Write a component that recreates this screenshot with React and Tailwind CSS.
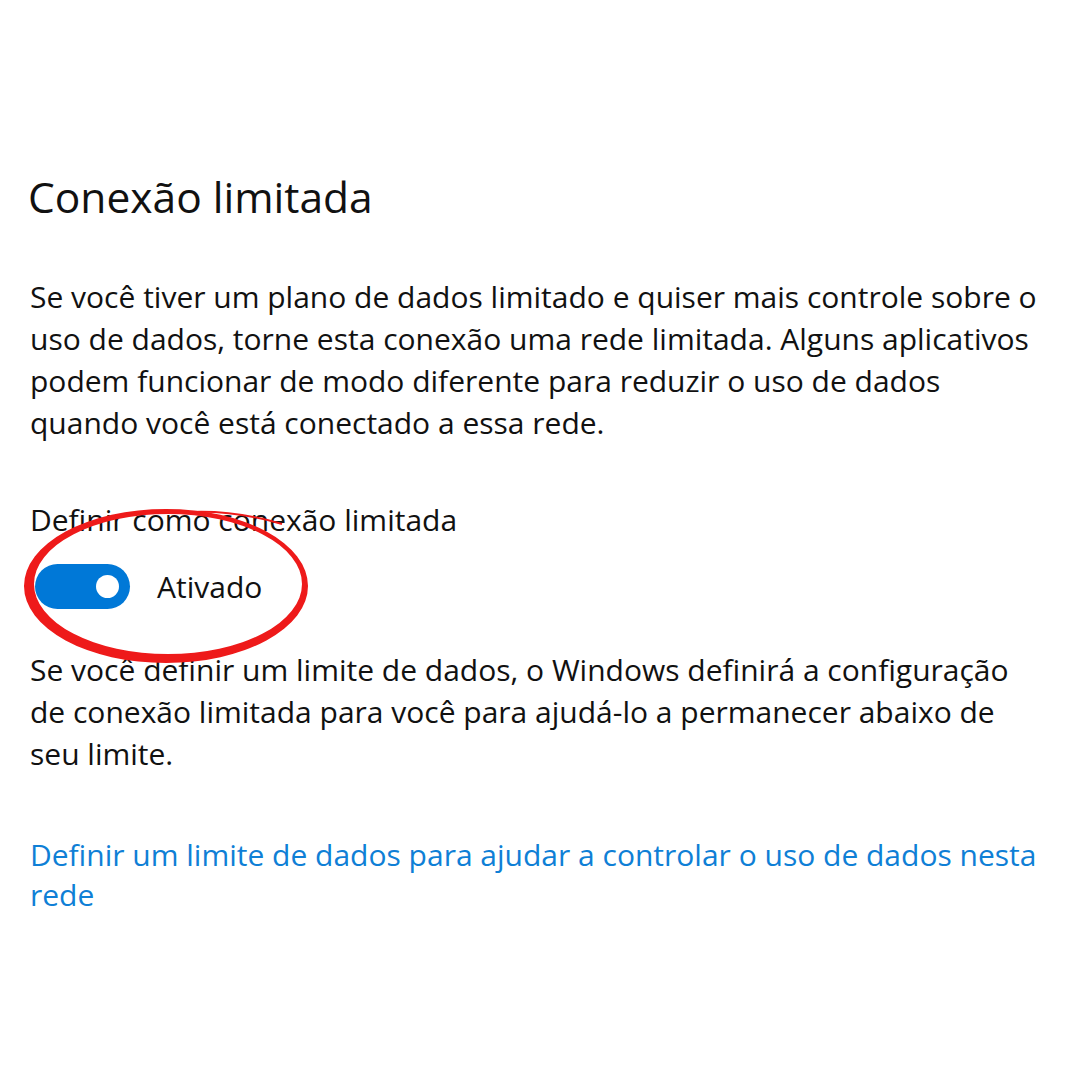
import React from 'react';

const Toggle = ({ on }) => (
    <div className={`flex h-[45px] w-[95px] items-center rounded-full px-[11px] ${on ? 'justify-end bg-[#0078d7]' : 'justify-start border-2 border-black bg-white'}`}>
        <div className={`h-[23px] w-[23px] rounded-full ${on ? 'bg-white' : 'bg-black'}`} />
    </div>
);

// hand-drawn style marker circle (thick bottom-left, thinner top-right)
const MarkerCircle = () => (
    <svg className="pointer-events-none absolute left-[20px] top-[500px]" width="300" height="175" viewBox="0 0 300 175">
        <path
            fillRule="evenodd"
            fill="#ee1a1a"
            d="M4 86 A142 77 0 1 0 288 86 A142 77 0 1 0 4 86 Z M14 84 A134 70 0 1 1 282 84 A134 70 0 1 1 14 84 Z"
        />
        <path d="M170 12 Q215 10 262 24" fill="none" stroke="#ee1a1a" strokeWidth="2" />
    </svg>
);

const App = () => {
    return (
        <div className="relative min-h-[1080px] w-[1080px] bg-white pl-[30px] pr-[35px] pt-[169px] text-[#111] font-['Open_Sans',sans-serif]">
            <h1 className="text-[42.5px] leading-[56px] -ml-[2px]">Conexão limitada</h1>

            <p className="mt-[51px] text-[30px] leading-[42px]">
                Se você tiver um plano de dados limitado e quiser mais controle sobre o uso de dados, torne esta conexão uma rede limitada. Alguns aplicativos podem funcionar de modo diferente para reduzir o uso de dados quando você está conectado a essa rede.
            </p>

            <div className="mt-[55px] text-[30px] leading-[42px]">Definir como conexão limitada</div>
            <div className="mt-[23px] flex items-center gap-[27px] pl-[5px]">
                <Toggle on />
                <span className="text-[30px] leading-[42px]">Ativado</span>
            </div>

            <p className="mt-[40px] text-[30px] leading-[42px]">
                Se você definir um limite de dados, o Windows definirá a configuração de conexão limitada para você para ajudá-lo a permanecer abaixo de seu limite.
            </p>

            <a href="#" className="mt-[60px] block text-[30px] leading-[40px] text-[#0f7fd6]">
                Definir um limite de dados para ajudar a controlar o uso de dados nesta rede
            </a>

            <MarkerCircle />
        </div>
    );
};

export default App;
